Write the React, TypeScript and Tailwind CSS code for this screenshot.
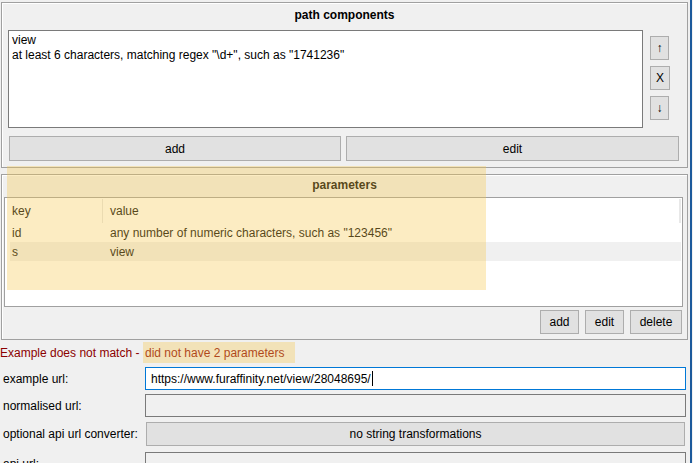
import React from "react";

const Btn = ({ className = "", children }: { className?: string; children?: React.ReactNode }) => (
  <div className={`shrink-0 flex items-center justify-center border border-[#adadad] bg-[#e1e1e1] text-[12px] text-black ${className}`}>
    {children}
  </div>
);

const Row = ({ label, children, className = "" }: { label: string; children: React.ReactNode; className?: string }) => (
  <div className={`shrink-0 flex items-center ${className}`}>
    <div className="w-[145px] shrink-0 pl-[3px] leading-[16px]">{label}</div>
    {children}
  </div>
);

export default function App() {
  return (
    <div className="relative flex w-[693px] h-[463px] overflow-hidden bg-[#f0f0f0] text-[12px] text-black font-['Liberation_Sans',Arial,sans-serif]">
      <div className="flex flex-col w-[690px] pt-[2px]">
        {/* path components */}
        <div className="shrink-0 ml-[1px] w-[687px] h-[166px] flex flex-col border border-[#a0a0a0] shadow-[inset_1px_1px_0_#fff]">
          <div className="shrink-0 h-[24px] flex items-center justify-center font-bold">path components</div>
          <div className="shrink-0 flex mt-[3px]">
            <div className="ml-[6px] w-[635px] h-[98px] bg-white border border-[#7a7a7a] pl-[3px] pt-[2px] leading-[15px]">
              <div>view</div>
              <div>at least 6 characters, matching regex "\d+", such as "1741236"</div>
            </div>
            <div className="ml-[7px] pt-[6px] flex flex-col gap-[6px]">
              <Btn className="w-[19px] h-[24px] text-[#1f3f6f]">↑</Btn>
              <Btn className="w-[20px] h-[24px]">X</Btn>
              <Btn className="w-[19px] h-[24px] text-[#5a2f2f]">↓</Btn>
            </div>
          </div>
          <div className="shrink-0 flex mt-[8px] ml-[7px] gap-[5px]">
            <Btn className="w-[332px] h-[25px]">add</Btn>
            <Btn className="w-[333px] h-[25px]">edit</Btn>
          </div>
        </div>

        {/* parameters */}
        <div className="shrink-0 ml-[1px] mt-[6px] w-[687px] h-[166px] flex flex-col border border-[#a0a0a0] shadow-[inset_1px_1px_0_#fff]">
          <div className="shrink-0 h-[20px] flex items-center justify-center font-bold">parameters</div>
          <div className="shrink-0 mt-[2px] ml-[2px] w-[679px] h-[110px] bg-white border border-[#a0a0a0] pt-[1px] flex flex-col">
            <div className="shrink-0 flex h-[24px] items-center ml-[5px] mr-[1px] relative">
              <div className="w-[93px] h-full flex items-center pl-[2px] border-r border-[#e5e5e5]">key</div>
              <div className="pl-[7px]">value</div>
              <div className="absolute right-0 top-0 w-[2px] h-[24px] bg-[#e8e8e8]" />
            </div>
            <div className="shrink-0 flex h-[19px] items-center ml-[5px] mr-[1px]">
              <div className="w-[93px] pl-[2px]">id</div>
              <div className="pl-[7px]">any number of numeric characters, such as "123456"</div>
            </div>
            <div className="shrink-0 flex h-[19px] items-center ml-[5px] mr-[1px] bg-[#f0f0f0]">
              <div className="w-[93px] pl-[2px]">s</div>
              <div className="pl-[7px]">view</div>
            </div>
          </div>
          <div className="shrink-0 flex justify-end gap-[6px] mt-[3px] pr-[5px]">
            <Btn className="w-[39px] h-[24px]">add</Btn>
            <Btn className="w-[39px] h-[24px]">edit</Btn>
            <Btn className="w-[52px] h-[24px]">delete</Btn>
          </div>
        </div>

        {/* status */}
        <div className="shrink-0 mt-[2px] h-[21px] flex items-center text-[#8b0000]">
          <span className="w-[145px] shrink-0">Example does not match -</span>
          <span>did not have 2 parameters</span>
        </div>

        <Row label="example url:" className="mt-[4px]">
          <div className="w-[541px] h-[23px] bg-white border border-[#0078d7] flex items-center pl-[5px]">
            <span>https://www.furaffinity.net/view/28048695/</span>
            <span className="ml-[1px] w-[1px] h-[15px] bg-black" />
          </div>
        </Row>
        <Row label="normalised url:" className="mt-[4px]">
          <div className="w-[541px] h-[23px] bg-[#f0f0f0] border border-[#7a7a7a]" />
        </Row>
        <Row label="optional api url converter:" className="mt-[5px]">
          <Btn className="ml-[1px] w-[539px] h-[24px]">no string transformations</Btn>
        </Row>
        <Row label="api url:" className="mt-[6px]">
          <div className="w-[541px] h-[23px] bg-[#f0f0f0] border border-[#7a7a7a]" />
        </Row>
      </div>
      <div className="w-[2px] bg-[#1c5a9c]" />

      {/* highlight overlays */}
      <div className="absolute left-[7px] top-[166px] w-[479px] h-[124px] bg-[rgba(247,200,80,0.35)]" />
      <div className="absolute left-[143px] top-[342px] w-[152px] h-[21px] bg-[rgba(247,200,80,0.35)]" />
    </div>
  );
}
